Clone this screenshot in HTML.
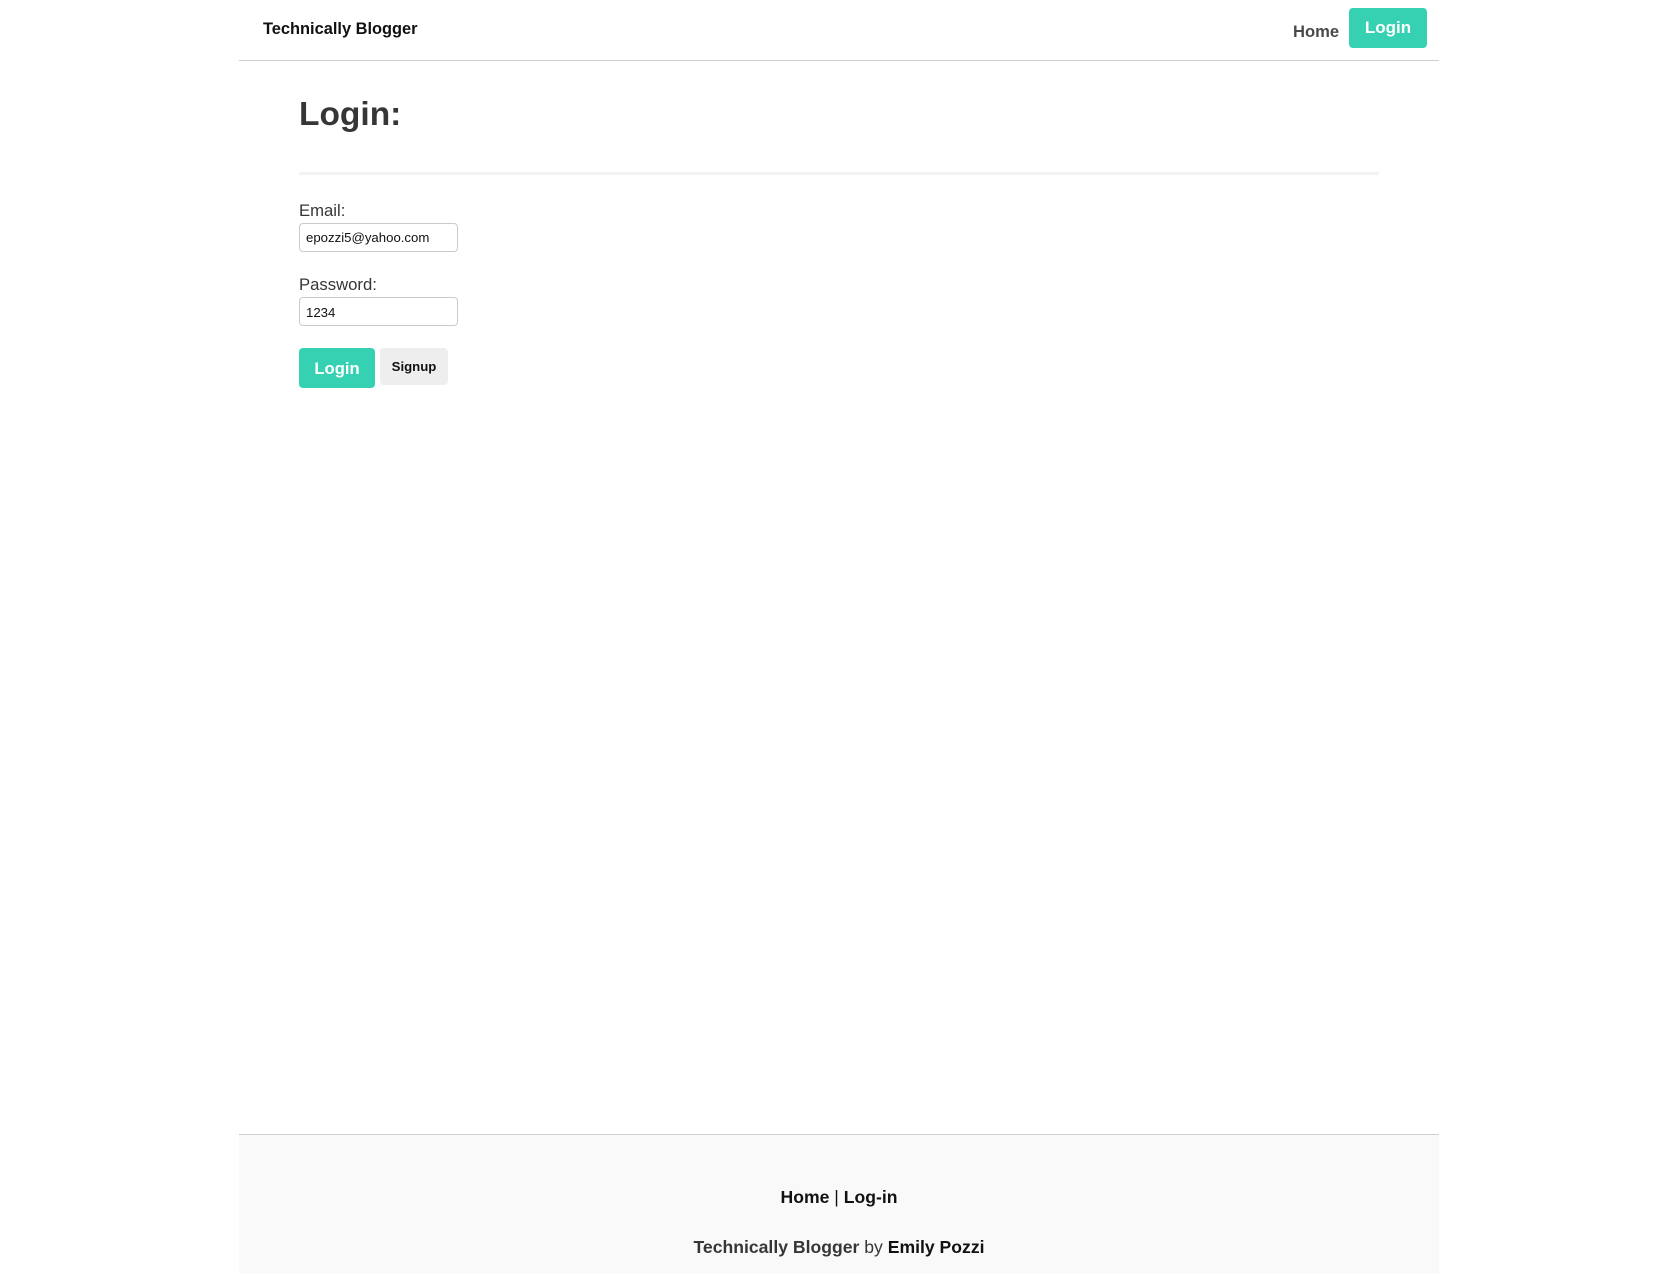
<!DOCTYPE html>
<html><head><meta charset="utf-8"><style>
*{box-sizing:border-box;margin:0;padding:0}
body{width:1678px;height:1268px;background:#fff;font-family:"Liberation Sans",Arial,sans-serif;position:relative;overflow:hidden;color:#363636}
.a{position:absolute}
.wrap{left:239px;width:1200px}
</style></head><body>
<div class="a wrap" style="top:0;height:61px;border-bottom:1.5px solid #cfcfcf"></div>
<div class="a" style="left:263px;top:20px;font-size:16.4px;font-weight:bold;color:#111">Technically Blogger</div>
<div class="a" style="left:1293px;top:22px;font-size:16.6px;font-weight:bold;color:#4a4a4a">Home</div>
<div class="a" style="left:1349px;top:8px;width:78px;height:40px;background:#36d1b3;border-radius:4px;color:#fff;font-size:17px;font-weight:bold;text-align:center;line-height:40px">Login</div>
<div class="a" style="left:299px;top:96px;font-size:33.5px;font-weight:bold;color:#363636">Login:</div>
<div class="a" style="left:299px;top:172px;width:1080px;height:3px;background:#f3f3f3"></div>
<div class="a" style="left:299px;top:201px;font-size:16.7px">Email:</div>
<div class="a" style="left:299px;top:223px;width:159px;height:29px;border:1px solid #cbcbcb;border-radius:4px;font-size:13.2px;color:#111;padding-left:6px;line-height:28px">epozzi5@yahoo.com</div>
<div class="a" style="left:299px;top:275px;font-size:16.7px">Password:</div>
<div class="a" style="left:299px;top:297px;width:159px;height:29px;border:1px solid #cbcbcb;border-radius:4px;font-size:13.2px;color:#111;padding-left:6px;line-height:29px">1234</div>
<div class="a" style="left:299px;top:348px;width:76px;height:40px;background:#36d1b3;border-radius:4px;color:#fff;font-size:16.6px;font-weight:bold;text-align:center;line-height:41px">Login</div>
<div class="a" style="left:380px;top:348px;width:68px;height:37px;background:#eeeeee;border-radius:4px;color:#111;font-size:13.2px;font-weight:bold;text-align:center;line-height:38px">Signup</div>
<div class="a wrap" style="top:1134px;height:140px;background:#f9f9f9;border-top:1.5px solid #cfcfcf"></div>
<div class="a" style="left:0;width:1678px;top:1187px;text-align:center;font-size:17.6px;color:#111"><b>Home</b> | <b>Log-in</b></div>
<div class="a" style="left:0;width:1678px;top:1237px;text-align:center;font-size:17.6px;color:#363636"><b>Technically Blogger</b> by <b style="color:#111">Emily Pozzi</b></div>
</body></html>
